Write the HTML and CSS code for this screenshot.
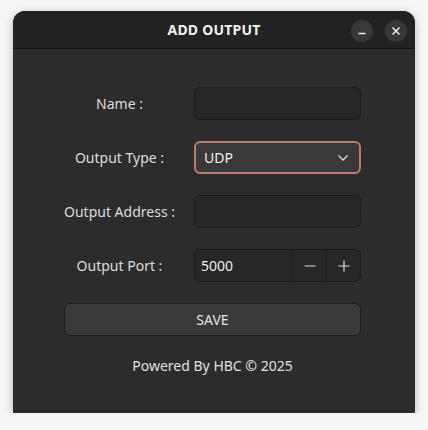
FILE: index.html
```html
<!DOCTYPE html>
<html lang="en">
<head>
    <meta charset="UTF-8">
    <meta name="viewport" content="width=device-width, initial-scale=1.0">
    <title>Add Output</title>
    <link rel="stylesheet" href="styles.css">
</head>
<body>
    <div class="window">
        <div class="titlebar">
            <h1>ADD OUTPUT</h1>
            <div class="controls">
                <button class="ctl" aria-label="Minimize">
                    <svg width="10" height="10" viewBox="0 0 10 10"><path d="M1.5 7.5h7" stroke="#eee" stroke-width="1.4"/></svg>
                </button>
                <button class="ctl" aria-label="Close">
                    <svg width="10" height="10" viewBox="0 0 10 10"><path d="M1.5 1.5l7 7M8.5 1.5l-7 7" stroke="#eee" stroke-width="1.5"/></svg>
                </button>
            </div>
        </div>

        <div class="content">
            <div class="form">
                <label class="label">Name :</label>
                <div class="field"></div>

                <label class="label">Output Type :</label>
                <div class="field select">
                    <span>UDP</span>
                    <svg width="12" height="8" viewBox="0 0 12 8"><path d="M1.5 1.5l4.5 4.5 4.5-4.5" fill="none" stroke="#ddd" stroke-width="1.3"/></svg>
                </div>

                <label class="label">Output Address :</label>
                <div class="field"></div>

                <label class="label">Output Port :</label>
                <div class="field spin">
                    <span class="spin-value">5000</span>
                    <span class="spin-btn">
                        <svg width="12" height="12" viewBox="0 0 12 12"><path d="M0.5 6h11" stroke="#ddd" stroke-width="1.2"/></svg>
                    </span>
                    <span class="spin-btn">
                        <svg width="12" height="12" viewBox="0 0 12 12"><path d="M0.5 6h11M6 0.5v11" stroke="#ddd" stroke-width="1.2"/></svg>
                    </span>
                </div>
            </div>

            <button class="save">SAVE</button>

            <div class="footer">Powered By HBC &copy; 2025</div>
        </div>
    </div>
</body>
</html>
```

FILE: styles.css
```css
* { margin: 0; padding: 0; box-sizing: border-box; }
body {
    font-family: 'Noto Sans', 'Open Sans', sans-serif;
    background: #f6f6f6;
    color: #dedede;
    font-size: 14px;
}
.window {
    width: 402px;
    height: 402px;
    margin: 11px 0 0 13px;
    background: #2c2c2c;
    border-radius: 12px 12px 0 0;
    box-shadow: 0 2px 10px rgba(0,0,0,0.25);
    overflow: hidden;
}
.titlebar {
    height: 38px;
    background: #222;
    border-bottom: 1px solid #141414;
    display: flex;
    align-items: center;
    justify-content: center;
    position: relative;
}
.titlebar h1 {
    font-size: 14px;
    font-weight: bold;
    color: #f2f2f2;
    letter-spacing: 0.2px;
}
.controls {
    position: absolute;
    right: 8px;
    top: 9px;
    display: flex;
    gap: 12px;
}
.ctl {
    width: 22px;
    height: 22px;
    border-radius: 50%;
    border: none;
    background: #383838;
    display: flex;
    align-items: center;
    justify-content: center;
}
.content {
    padding: 38px 54px 0 51px;
}
.form {
    display: grid;
    grid-template-columns: 111px 1fr;
    column-gap: 19px;
    row-gap: 21px;
}
.label {
    height: 33px;
    display: flex;
    align-items: center;
    justify-content: center;
    color: #dcdcdc;
}
.field {
    height: 33px;
    background: #272727;
    border: 1px solid #1a1a1a;
    border-radius: 6px;
    display: flex;
    align-items: center;
}
.select {
    background: #383838;
    border: 2px solid #c27a65;
    padding: 0 10px 0 8px;
    justify-content: space-between;
    color: #f0f0f0;
}
.spin {
    overflow: hidden;
}
.spin-value {
    flex: 1;
    padding-left: 6px;
    color: #eee;
}
.spin-btn {
    width: 34px;
    height: 100%;
    border-left: 1px solid #1e1e1e;
    display: flex;
    align-items: center;
    justify-content: center;
}
.save {
    display: block;
    width: 100%;
    height: 33px;
    margin-top: 21px;
    background: #3a3a3a;
    border: 1px solid #1a1a1a;
    border-radius: 6px;
    color: #e4e4e4;
    font-family: inherit;
    font-size: 14px;
}
.footer {
    text-align: center;
    margin-top: 20px;
    color: #e0e0e0;
}
```
